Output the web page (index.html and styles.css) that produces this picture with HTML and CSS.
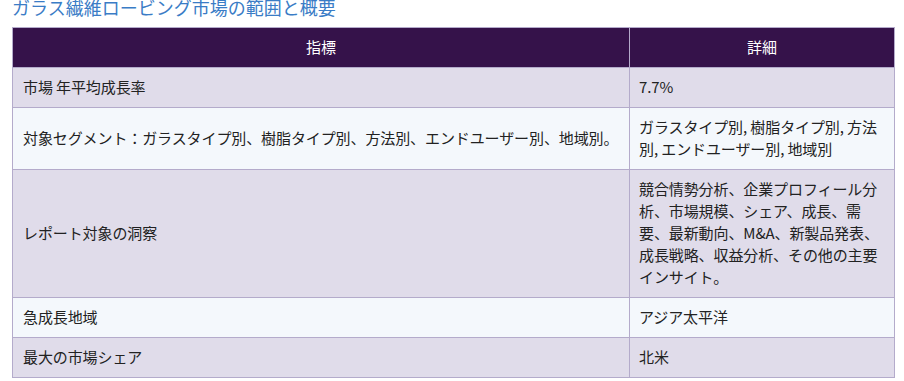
FILE: index.html
```html
<!DOCTYPE html>
<html lang="ja">
<head>
<meta charset="utf-8">
<title>ガラス繊維ロービング市場の範囲と概要</title>
<link rel="stylesheet" href="styles.css">
</head>
<body>
<div class="page">
  <h2 class="title">ガラス繊維ロービング市場の範囲と概要</h2>
  <table class="scope">
    <thead>
      <tr><th class="col-a">指標</th><th class="col-b">詳細</th></tr>
    </thead>
    <tbody>
      <tr><td>市場 年平均成長率</td><td>7.7%</td></tr>
      <tr><td>対象セグメント：ガラスタイプ別、樹脂タイプ別、方法別、エンドユーザー別、地域別。</td><td>ガラスタイプ別, 樹脂タイプ別, 方法別, エンドユーザー別, 地域別</td></tr>
      <tr><td>レポート対象の洞察</td><td>競合情勢分析、企業プロフィール分析、市場規模、シェア、成長、需要、最新動向、M&amp;A、新製品発表、成長戦略、収益分析、その他の主要インサイト。</td></tr>
      <tr><td>急成長地域</td><td>アジア太平洋</td></tr>
      <tr><td>最大の市場シェア</td><td>北米</td></tr>
    </tbody>
  </table>
</div>
</body>
</html>
```
FILE: styles.css
```css
html, body {
  margin: 0;
  padding: 0;
  background: #ffffff;
}
body {
  font-family: "Noto Sans CJK JP", "Noto Sans", sans-serif;
  color: #222222;
}
.page {
  padding: 0 10px 0 12px;
}
.title {
  margin: -7px 0 0;
  font-size: 18px;
  line-height: 28px;
  font-weight: 400;
  color: #3a7cc6;
  height: 34px;
  white-space: nowrap;
}
.scope {
  width: 883px;
  border-collapse: collapse;
  font-size: 15px;
  line-height: 22px;
}
.scope th,
.scope td {
  border: 1px solid #b4abcb;
  padding: 8px 9px 9px 9px;
  text-align: left;
  vertical-align: middle;
}
.scope td {
  letter-spacing: -0.1px;
}
.scope th {
  background: #35124a;
  color: #ffffff;
  font-weight: 400;
  text-align: center;
}
.col-a {
  width: 598px;
}
.scope td:first-child {
  padding-left: 10px;
}
.scope tbody tr:nth-child(odd) td {
  background: #e0dcea;
}
.scope tbody tr:nth-child(even) td {
  background: #f4f8fc;
}
```
